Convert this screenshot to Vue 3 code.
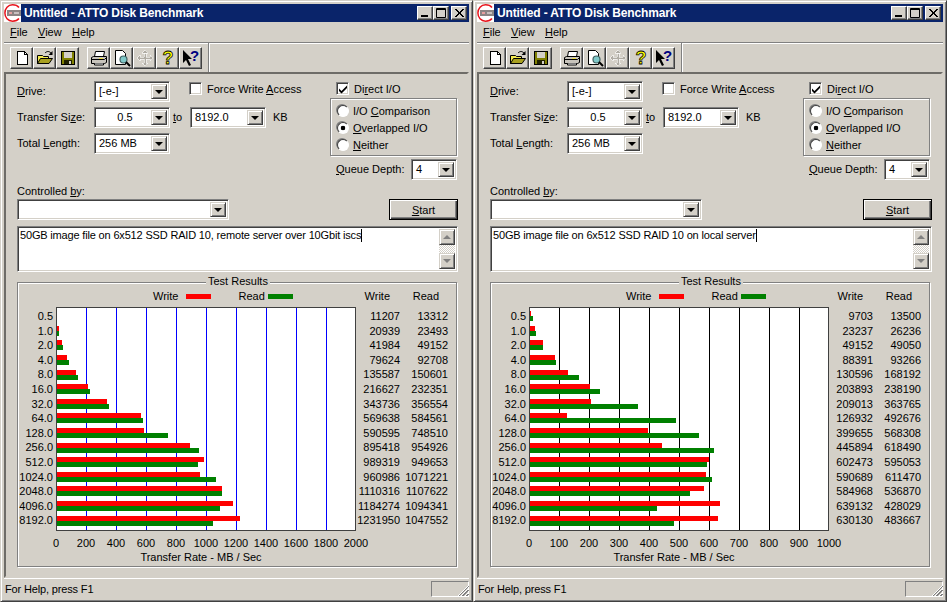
<template>
  <div class="desktop">
    <div v-for="win in windows" :key="win.memo" class="window">
      <div class="titlebar">
        <svg class="app-icon" viewBox="0 0 17 18" width="17" height="18">
          <rect width="17" height="18" fill="#fff" />
          <path d="M15 3.5C13.5 1.5 11 .8 8.5 .8 4 .8 .9 4.5 .9 9s3.1 8.2 7.6 8.2c2.500 0 5-.7 6.500-2.700" fill="none" stroke="#e8141c" stroke-width="1.5" />
          <rect x="3" y="6" width="14" height="6" fill="#8c8484" />
          <rect x="5" y="8" width="3" height="2" fill="#e8a0a0" />
          <rect x="10" y="8" width="5" height="2" fill="#c8c0c0" />
        </svg>
        <span class="title-text">Untitled - ATTO Disk Benchmark</span>
        <div class="title-buttons">
          <button class="cap-btn"><svg viewBox="0 0 14 12" width="14" height="12"><rect x="3" y="8" width="7" height="2" /></svg></button>
          <button class="cap-btn"><svg viewBox="0 0 14 12" width="14" height="12"><path d="M2.5 1.5h9v9h-9z M2 2.5h10" fill="none" stroke="#000" /></svg></button>
          <button class="cap-btn close"><svg viewBox="0 0 14 12" width="14" height="12"><path d="M3 2l8 8M4 2l8 8M11 2l-8 8M12 2l-8 8" stroke="#000" fill="none" /></svg></button>
        </div>
      </div>

      <div class="menubar">
        <span><u>F</u>ile</span>
        <span><u>V</u>iew</span>
        <span><u>H</u>elp</span>
      </div>

      <div class="toolbar">
        <button class="tool">
          <svg viewBox="0 0 16 16" width="16" height="16" shape-rendering="crispEdges">
            <path d="M3.5 1.5h7l3 3v10h-10z" fill="#fff" stroke="#000" />
            <path d="M10.5 1.5v3h3" fill="none" stroke="#000" />
          </svg>
        </button>
        <button class="tool">
          <svg viewBox="0 0 18 16" width="18" height="16">
            <path d="M1.5 5.5h5l1 1h5v7h-11z" fill="#f2e94e" stroke="#000" />
            <path d="M1.5 13.5l3-5h12l-3.5 5z" fill="#a8a020" stroke="#000" />
            <path d="M9 3c2-2 4-2 6 0" fill="none" stroke="#000" />
            <path d="M16.5 1v4h-4z" fill="#000" />
          </svg>
        </button>
        <button class="tool">
          <svg viewBox="0 0 16 16" width="16" height="16" shape-rendering="crispEdges">
            <path d="M1.5 1.5h13v13h-13z" fill="#808000" stroke="#000" />
            <rect x="4" y="2" width="8" height="6" fill="#d4d0c8" />
            <rect x="4" y="10" width="8" height="4" fill="#202000" />
            <rect x="9" y="11" width="2" height="3" fill="#d4d0c8" />
          </svg>
        </button>
        <span class="tool-gap"></span>
        <button class="tool">
          <svg viewBox="0 0 18 16" width="18" height="16">
            <path d="M5.5 1.5h9l-1 5h-9z" fill="#fff" stroke="#000" />
            <path d="M1.5 7.5l2-1h13v6l-2 1h-13z" fill="#c8c4bc" stroke="#000" />
            <path d="M1.5 9.5h13l2-2" fill="none" stroke="#000" />
            <rect x="9" y="8" width="4" height="1" fill="#f0e040" />
            <path d="M4.5 13.5v1.5h9v-1.5" fill="#fff" stroke="#000" />
          </svg>
        </button>
        <button class="tool">
          <svg viewBox="0 0 18 18" width="18" height="18">
            <path d="M2.5 1.5h7l3 3v11h-10z" fill="#fff" stroke="#000" />
            <circle cx="10.5" cy="10.5" r="3.5" fill="#7fc8c8" stroke="#406060" stroke-width="1.2" />
            <path d="M13 13l4 4" stroke="#000" stroke-width="2" />
          </svg>
        </button>
        <button class="tool" disabled>
          <svg viewBox="0 0 18 18" width="18" height="18" shape-rendering="crispEdges">
            <path d="M8 4h2v4h4v-2l3 3-3 3v-2h-4v4h2l-3 3-3-3h2v-4h-4v2l-3-3 3-3v2h4v-4h-2l3-3 3 3z" fill="#b0aca4" stroke="#fff" stroke-width=".6" />
          </svg>
        </button>
        <button class="tool">
          <svg class="open-svg" viewBox="0 0 16 18" width="16" height="18">
            <text x="8" y="15" text-anchor="middle" class="help-mark">?</text>
          </svg>
        </button>
        <button class="tool">
          <svg class="open-svg" viewBox="0 0 20 18" width="20" height="18">
            <path d="M2 1v13l3-3 3 6 2-1-3-6h4z" fill="#000" />
            <text x="13.5" y="12" text-anchor="middle" class="context-mark">?</text>
          </svg>
        </button>
        <span class="tool-sep"></span>
      </div>

      <div class="client">
        <div class="settings">
          <div class="fields">
            <label><u>D</u>rive:</label>
            <div class="combo"><span class="combo-text">[-e-]</span><span class="arrow"></span></div>
            <div class="check-row force">
              <span class="check"></span>
              <span>Force Write <u>A</u>ccess</span>
            </div>

            <label>Transfer Si<u>z</u>e:</label>
            <div class="combo"><span class="combo-text center">0.5</span><span class="arrow"></span></div>
            <span class="to"><u>t</u>o</span>
            <div class="combo"><span class="combo-text">8192.0</span><span class="arrow"></span></div>
            <span class="kb">KB</span>

            <label>Total <u>L</u>ength:</label>
            <div class="combo"><span class="combo-text">256 MB</span><span class="arrow"></span></div>
          </div>

          <div class="io">
            <div class="check-row direct">
              <span class="check on">
                <svg viewBox="0 0 10 10" width="10" height="10"><path d="M1 4.5l2.5 2.5 5.5-5.5v2.5l-5.5 5.5-2.5-2.5z" /></svg>
              </span>
              <span>Di<u>r</u>ect I/O</span>
            </div>
            <div class="io-group">
              <div class="radio-row"><span class="radio"></span><span>I/O <u>C</u>omparison</span></div>
              <div class="radio-row"><span class="radio on"></span><span><u>O</u>verlapped I/O</span></div>
              <div class="radio-row"><span class="radio"></span><span><u>N</u>either</span></div>
            </div>
            <div class="queue">
              <span class="queue-label"><u>Q</u>ueue Depth:</span>
              <div class="combo small"><span class="combo-text">4</span><span class="arrow"></span></div>
            </div>
          </div>
        </div>

        <div class="controlled-label">Controlled <u>b</u>y:</div>
        <div class="controlled">
          <div class="combo wide"><span class="combo-text"></span><span class="arrow"></span></div>
          <button class="start"><span><u>S</u>tart</span></button>
        </div>

        <div class="memo">
          <div class="memo-text">{{ win.memo }}<span class="caret"></span></div>
          <div class="scrollbar">
            <span class="scroll-btn"><i class="up"></i></span>
            <span class="scroll-track"></span>
            <span class="scroll-btn"><i class="down"></i></span>
          </div>
        </div>

        <div class="results">
          <span class="results-title">Test Results</span>
          <div class="chart-head">
            <span></span>
            <div class="legend">
              <span>Write</span><i class="swatch red"></i>
              <span class="read-key">Read</span><i class="swatch green"></i>
            </div>
            <span class="head-write">Write</span>
            <span class="head-read">Read</span>
          </div>
          <div class="chart-body">
            <div class="col labels">
              <span v-for="s in sizes" :key="s">{{ s }}</span>
            </div>
            <div class="plot" :class="{ black: win.max === 1000 }">
              <div v-for="(r, i) in win.rows" :key="i" class="bars">
                <i class="bar red" :style="{ width: barWidth(r[0], win) + 'px' }"></i>
                <i class="bar green" :style="{ width: barWidth(r[1], win) + 'px' }"></i>
              </div>
            </div>
            <div class="col nums">
              <span v-for="(r, i) in win.rows" :key="i">{{ r[0] }}</span>
            </div>
            <div class="col nums">
              <span v-for="(r, i) in win.rows" :key="i">{{ r[1] }}</span>
            </div>
          </div>
          <div class="axis">
            <span v-for="n in 11" :key="n">{{ (n - 1) * win.max / 10 }}</span>
          </div>
          <div class="axis-title">Transfer Rate - MB / Sec</div>
        </div>
      </div>

      <div class="statusbar">
        <span class="status-text">For Help, press F1</span>
        <span class="status-panel"></span>
        <svg class="grip" viewBox="0 0 12 12" width="12" height="12" shape-rendering="crispEdges">
          <path d="M11 1L1 11M12 1L2 11M11 5L5 11M12 5L6 11M11 9L9 11M12 9L10 11" stroke="#808080" fill="none" />
          <path d="M12 3L4 11M12 7L8 11M12 0L0 12" stroke="#fff" fill="none" />
        </svg>
      </div>
    </div>
  </div>
</template>

<script setup>
const sizes = ['0.5', '1.0', '2.0', '4.0', '8.0', '16.0', '32.0', '64.0', '128.0', '256.0', '512.0', '1024.0', '2048.0', '4096.0', '8192.0']

const windows = [
  {
    memo: '50GB image file on 6x512 SSD RAID 10, remote server over 10Gbit iscs',
    max: 2000,
    rows: [
      [11207, 13312], [20939, 23493], [41984, 49152], [79624, 92708], [135587, 150601],
      [216627, 232351], [343736, 356554], [569638, 584561], [590595, 748510], [895418, 954926],
      [989319, 949653], [960986, 1071221], [1110316, 1107622], [1184274, 1094341], [1231950, 1047552]
    ]
  },
  {
    memo: '50GB image file on 6x512 SSD RAID 10 on local server',
    max: 1000,
    rows: [
      [9703, 13500], [23237, 26236], [49152, 49050], [88391, 93266], [130596, 168192],
      [203893, 238190], [209013, 363765], [126932, 492676], [399655, 568308], [445894, 618490],
      [602473, 595053], [590689, 611470], [584968, 536870], [639132, 428029], [630130, 483667]
    ]
  }
]

// 300px of plot covers the whole scale, values are in KB/s
const barWidth = (value, win) => Math.max(0, Math.floor(value / 1000 * 300 / win.max - 1))
</script>

<style>
html, body {
  margin: 0;
  background: #d4d0c8;
}
</style>

<style scoped>
.desktop {
  display: flex;
  width: 947px;
  height: 602px;
  overflow: hidden;
  font-family: "Liberation Sans", Arial, sans-serif;
  font-size: 11px;
  color: #000;
  background: #d4d0c8;
}

.window {
  display: flex;
  flex: none;
  flex-direction: column;
  box-sizing: border-box;
  width: 473px;
  height: 602px;
  padding: 3px;
  border: 1px solid;
  border-color: #d4d0c8 #404040 #404040 #d4d0c8;
  box-shadow: inset 1px 1px 0 #fff, inset -1px -1px 0 #808080;
}
.window:last-child { width: 474px; }

.titlebar {
  display: flex;
  align-items: center;
  height: 18px;
  flex: none;
  background: #0a246a;
  color: #fff;
}
.app-icon { flex: none; margin-right: 3px; }
.title-text {
  font-weight: bold;
  font-size: 12px;
  letter-spacing: -.15px;
  white-space: nowrap;
}
.title-buttons {
  display: flex;
  margin-left: auto;
  margin-right: 2px;
}
.cap-btn {
  display: flex;
  align-items: center;
  justify-content: center;
  box-sizing: border-box;
  width: 16px;
  height: 14px;
  padding: 0;
  background: #d4d0c8;
  border: 1px solid;
  border-color: #fff #404040 #404040 #fff;
  box-shadow: inset -1px -1px 0 #808080;
}
.cap-btn.close { margin-left: 2px; }

.menubar {
  display: grid;
  flex: none;
  grid-template-columns: 28px 34px 30px;
  align-items: center;
  height: 20px;
  padding-left: 6px;
}

.toolbar {
  display: flex;
  flex: none;
  box-sizing: border-box;
  height: 30px;
  padding: 3px 0 0 6px;
  border-top: 1px solid #808080;
  box-shadow: inset 0 1px 0 #fff;
}
.tool {
  display: flex;
  align-items: center;
  justify-content: center;
  box-sizing: border-box;
  width: 23px;
  height: 22px;
  margin-top: 1px;
  padding: 0;
  background: #d4d0c8;
  border: 1px solid;
  border-color: #fff #404040 #404040 #fff;
  box-shadow: inset -1px -1px 0 #808080;
}
.tool-gap { width: 8px; }
.tool-sep {
  width: 1px;
  height: 29px;
  margin: -3px 0 0 6px;
  background: #808080;
  border-right: 1px solid #fff;
}
.open-svg { overflow: visible; }
.help-mark {
  font-family: "Liberation Sans", sans-serif;
  font-size: 18px;
  font-weight: bold;
  fill: #ff0;
  stroke: #000;
  stroke-width: .8px;
}
.context-mark {
  font-family: "Liberation Sans", sans-serif;
  font-size: 15px;
  font-weight: bold;
  fill: #000080;
}

.client {
  flex: 1;
  box-sizing: border-box;
  padding: 7px 9px 0 11px;
  border: 2px solid;
  border-color: #6e6c68 #d4d0c8 #d4d0c8 #6e6c68;
}

.settings {
  display: flex;
  height: 103px;
}
.fields {
  display: grid;
  grid-template-columns: 77px 76px 20px 76px 1fr;
  grid-auto-rows: 21px;
  row-gap: 5px;
  align-items: center;
  align-content: start;
  width: 313px;
}
.fields label, .to, .kb { padding-bottom: 2px; }
.force {
  grid-column: 3 / 6;
  align-self: start;
  height: 15px;
  padding-left: 19px;
}
.to { padding-left: 3px; }
.kb { padding-left: 7px; }

.combo {
  display: flex;
  box-sizing: border-box;
  height: 21px;
  padding: 2px;
  background: #fff;
  border: 1px solid;
  border-color: #808080 #fff #fff #808080;
  box-shadow: inset 1px 1px 0 #404040, inset -1px -1px 0 #d4d0c8;
}
.combo-text {
  flex: 1;
  padding-left: 2px;
  line-height: 15px;
  white-space: nowrap;
}
.combo-text.center { text-align: center; }
.arrow {
  position: relative;
  flex: none;
  box-sizing: border-box;
  width: 16px;
  height: 15px;
  background: #d4d0c8;
  border: 1px solid;
  border-color: #d4d0c8 #404040 #404040 #d4d0c8;
  box-shadow: inset 1px 1px 0 #fff, inset -1px -1px 0 #808080;
}
.arrow::after {
  content: "";
  position: absolute;
  left: 3px;
  top: 5px;
  border: 4px solid transparent;
  border-top-color: #000;
  border-bottom: 0;
}
.combo.small { width: 46px; }
.combo.wide { width: 212px; }

.check-row {
  display: flex;
  align-items: center;
  gap: 5px;
}
.check {
  display: flex;
  align-items: center;
  justify-content: center;
  box-sizing: border-box;
  width: 13px;
  height: 13px;
  background: #fff;
  border: 1px solid;
  border-color: #808080 #fff #fff #808080;
  box-shadow: inset 1px 1px 0 #404040, inset -1px -1px 0 #d4d0c8;
}

.io { width: 127px; }
.direct {
  height: 15px;
  margin-bottom: 2px;
  padding-left: 6px;
}
.io-group {
  box-sizing: border-box;
  height: 58px;
  padding: 3px 0 0 6px;
  border: 1px solid #808080;
  box-shadow: 1px 1px 0 #fff, inset 1px 1px 0 #fff;
}
.radio-row {
  display: flex;
  align-items: center;
  gap: 4px;
  height: 17px;
}
.radio {
  box-sizing: border-box;
  width: 12px;
  height: 12px;
  background: #fff;
  border: 1px solid;
  border-color: #404040 #fff #fff #404040;
  border-radius: 50%;
  box-shadow: -1px -1px 0 #808080;
}
.radio.on { background: radial-gradient(circle, #000 2px, #fff 2.6px); }
.queue {
  display: flex;
  align-items: center;
  margin-top: 3px;
  padding-left: 6px;
}
.queue-label {
  width: 75px;
  padding-bottom: 2px;
  white-space: nowrap;
}

.controlled-label {
  height: 15px;
  line-height: 14px;
}
.controlled {
  display: flex;
  justify-content: space-between;
}
.start {
  box-sizing: border-box;
  width: 69px;
  height: 21px;
  padding: 0;
  font: inherit;
  background: #d4d0c8;
  border: 1px solid #000;
  box-shadow: inset 1px 1px 0 #fff, inset -1px -1px 0 #404040, inset -2px -2px 0 #808080;
}

.memo {
  display: flex;
  box-sizing: border-box;
  height: 46px;
  margin-top: 6px;
  padding: 2px;
  background: #fff;
  border: 1px solid;
  border-color: #808080 #fff #fff #808080;
  box-shadow: inset 1px 1px 0 #404040, inset -1px -1px 0 #d4d0c8;
}
.memo-text {
  flex: 1;
  letter-spacing: -.17px;
  line-height: 13px;
  white-space: nowrap;
}
.caret {
  display: inline-block;
  width: 1px;
  height: 13px;
  vertical-align: top;
  background: #000;
}
.scrollbar {
  display: flex;
  flex-direction: column;
  flex: none;
  width: 16px;
}
.scroll-btn {
  display: flex;
  align-items: center;
  justify-content: center;
  box-sizing: border-box;
  height: 16px;
  background: #d4d0c8;
  border: 1px solid;
  border-color: #d4d0c8 #404040 #404040 #d4d0c8;
  box-shadow: inset 1px 1px 0 #fff, inset -1px -1px 0 #808080;
}
.scroll-btn i { border: 4px solid transparent; }
.scroll-btn i.up { border-bottom-color: #808080; border-top: 0; }
.scroll-btn i.down { border-top-color: #808080; border-bottom: 0; }
.scroll-track {
  flex: 1;
  background: repeating-conic-gradient(#fff 0 25%, #d4d0c8 0 50%) 0 0 / 2px 2px;
}

.results {
  position: relative;
  box-sizing: border-box;
  width: 440px;
  height: 285px;
  margin-top: 10px;
  padding-top: 6px;
  border: 1px solid #808080;
  box-shadow: 1px 1px 0 #fff, inset 1px 1px 0 #fff;
}
.results-title {
  position: absolute;
  top: -8px;
  left: 188px;
  padding: 0 2px;
  line-height: 13px;
  background: #d4d0c8;
}
.chart-head {
  display: grid;
  grid-template-columns: 38px 300px 44px 48px;
  height: 18px;
  line-height: 14px;
}
.legend {
  display: flex;
  align-items: center;
  height: 14px;
  padding-left: 97px;
}
.swatch {
  width: 25px;
  height: 5px;
  margin-left: 8px;
}
.read-key {
  width: 22px;
  margin-left: 27px;
}
.red { background: #ff0000; }
.green { background: #008000; }
.head-write { text-align: right; padding-right: 10px; }
.head-read { text-align: right; padding-right: 9px; }

.chart-body {
  display: grid;
  grid-template-columns: 38px 300px 44px 48px;
}
.col {
  display: grid;
  grid-template-rows: repeat(15, 14.6px);
  padding-top: 2px;
  text-align: right;
  line-height: 14.6px;
}
.labels { padding-right: 3px; }
.plot {
  display: grid;
  grid-template-rows: repeat(15, 14.6px);
  box-sizing: border-box;
  height: 224px;
  padding-top: 1px;
  background-color: #fff;
  background-image: repeating-linear-gradient(to right, transparent 0 29px, #0000ff 29px 30px);
  border: 1px solid #404040;
}
.plot.black {
  background-image: repeating-linear-gradient(to right, transparent 0 29px, #000 29px 30px);
}
.bars {
  display: flex;
  flex-direction: column;
  justify-content: center;
}
.bar {
  display: block;
  height: 5px;
}

.axis {
  display: grid;
  grid-template-columns: repeat(11, 30px);
  margin: 5px 0 0 23px;
  text-align: center;
  line-height: 14px;
}
.axis-title {
  width: 300px;
  margin-left: 33px;
  text-align: center;
  line-height: 14px;
}

.statusbar {
  position: relative;
  display: flex;
  flex: none;
  align-items: center;
  justify-content: space-between;
  height: 19px;
  border-top: 1px solid #fff;
}
.status-text {
  padding-left: 1px;
  letter-spacing: -.15px;
}
.status-panel {
  box-sizing: border-box;
  width: 38px;
  height: 16px;
  border: 1px solid;
  border-color: #808080 #fff #fff #808080;
}
.grip {
  position: absolute;
  right: 0;
  bottom: 1px;
}
</style>
